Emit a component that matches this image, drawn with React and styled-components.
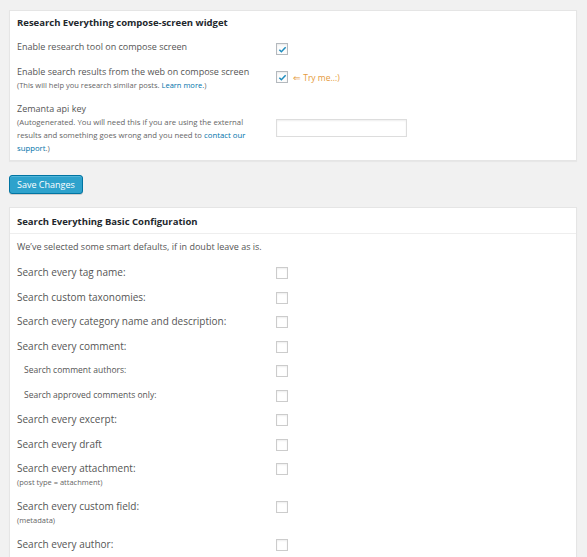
import React from 'react'
import styled, { createGlobalStyle } from 'styled-components'

const Global = createGlobalStyle`
  html, body {
    margin: 0;
    padding: 0;
    background: #f1f1f1;
  }
  body {
    font-family: 'Open Sans', 'Noto Sans', sans-serif;
    color: #444;
  }
`

const Page = styled.div`
  padding: 10px 10px 20px 9px;
`

const Panel = styled.div`
  background: #fff;
  border: 1px solid #e5e5e5;
  box-shadow: 0 1px 1px rgba(0, 0, 0, 0.04);
`

const PanelTitle = styled.h3`
  margin: 0;
  padding: ${p => (p.$ruled ? '6px 7px 4px' : '4px 7px 5px')};
  font-size: 9.5px;
  line-height: 15px;
  font-weight: 700;
  color: #23282d;
  border-bottom: ${p => (p.$ruled ? '1px solid #eee' : 'none')};
`

const PanelBody = styled.div`
  padding: ${p => p.$pad || '4px 7px 5px'};
`

const Intro = styled.p`
  margin: 0 0 10px;
  padding-top: 2px;
  font-size: 9px;
  color: #555;
  line-height: 14px;
`

const Row = styled.div`
  display: grid;
  grid-template-columns: 259px 1fr;
  align-items: start;
  min-height: ${p => p.$h || 24}px;
`

const Label = styled.div`
  font-size: ${p => (p.$small ? '8.5px' : p.$big ? '10px' : '9px')};
  color: #555;
  line-height: ${p => (p.$big ? '16px' : '15px')};
  padding-left: ${p => (p.$indent ? '7px' : '0')};
`

const Hint = styled.div`
  font-size: ${p => (p.$tight ? '7.75px' : '7.5px')};
  max-width: ${p => (p.$tight ? '236px' : 'none')};
  color: #666;
  line-height: 13px;
`

const Link = styled.a`
  color: #0073aa;
  text-decoration: none;
`

const Control = styled.div`
  display: flex;
  align-items: center;
  gap: 5px;
  padding-top: ${p => p.$top || 3}px;
`

const Box = styled.span`
  display: inline-flex;
  align-items: center;
  justify-content: center;
  width: 10px;
  height: 10px;
  border: 1px solid ${p => (p.$checked ? '#b4b9be' : '#ccc')};
  background: ${p => (p.$checked ? '#fcfcfc' : '#fff')};
  box-shadow: inset 0 1px 2px rgba(0, 0, 0, 0.07);
`

const TryMe = styled.span`
  font-size: 8.5px;
  color: #e59a3a;
`

const TextInput = styled.input`
  width: 131px;
  height: 18px;
  box-sizing: border-box;
  border: 1px solid #ddd;
  box-shadow: inset 0 1px 2px rgba(0, 0, 0, 0.07);
`

const SaveButton = styled.button`
  display: block;
  margin: 14px 0 13px;
  height: 19px;
  padding: 0 7px;
  font-family: inherit;
  font-size: 9px;
  color: #fff;
  background: #2ea2cc;
  border: 1px solid #0074a2;
  border-radius: 3px;
  box-shadow: inset 0 1px 0 rgba(120, 200, 230, 0.5), 0 1px 0 rgba(0, 0, 0, 0.15);
`

const Check = () => (
  <svg width="9" height="9" viewBox="0 0 20 20">
    <path d="M3 10.5l4.5 4.5L17 5" fill="none" stroke="#1e8cbe" strokeWidth="3.4" />
  </svg>
)

const basic = [
  { label: 'Search every tag name:' },
  { label: 'Search custom taxonomies:' },
  { label: 'Search every category name and description:' },
  { label: 'Search every comment:' },
  { label: 'Search comment authors:', small: true },
  { label: 'Search approved comments only:', small: true },
  { label: 'Search every excerpt:' },
  { label: 'Search every draft' },
  { label: 'Search every attachment:', hint: '(post type = attachment)' },
  { label: 'Search every custom field:', hint: '(metadata)' },
  { label: 'Search every author:' },
]

export default function App() {
  return (
    <Page>
      <Global />
      <Panel>
        <PanelTitle>Research Everything compose-screen widget</PanelTitle>
        <PanelBody>
          <Row $h={25}>
            <Label>Enable research tool on compose screen</Label>
            <Control $top={4}>
              <Box $checked><Check /></Box>
            </Control>
          </Row>
          <Row $h={37}>
            <Label>
              Enable search results from the web on compose screen
              <Hint>
                (This will help you research similar posts. <Link href="#">Learn more.</Link>)
              </Hint>
            </Label>
            <Control $top={7}>
              <Box $checked><Check /></Box>
              <TryMe>⇐ Try me..:)</TryMe>
            </Control>
          </Row>
          <Row $h={54}>
            <Label>
              Zemanta api key
              <Hint $tight>
                (Autogenerated. You will need this if you are using the external results and
                something goes wrong and you need to <Link href="#">contact our support</Link>.)
              </Hint>
            </Label>
            <Control $top={18}>
              <TextInput type="text" />
            </Control>
          </Row>
        </PanelBody>
      </Panel>

      <SaveButton>Save Changes</SaveButton>

      <Panel>
        <PanelTitle $ruled>Search Everything Basic Configuration</PanelTitle>
        <PanelBody $pad="4px 7px 4px">
          <Intro>We&rsquo;ve selected some smart defaults, if in doubt leave as is.</Intro>
          {basic.map(item => (
            <Row key={item.label} $h={item.hint ? 38 : 24.5}>
              <Label $big={!item.small} $small={item.small} $indent={item.small}>
                {item.label}
                {item.hint && <Hint>{item.hint}</Hint>}
              </Label>
              <Control $top={3}>
                <Box />
              </Control>
            </Row>
          ))}
        </PanelBody>
      </Panel>
    </Page>
  )
}
